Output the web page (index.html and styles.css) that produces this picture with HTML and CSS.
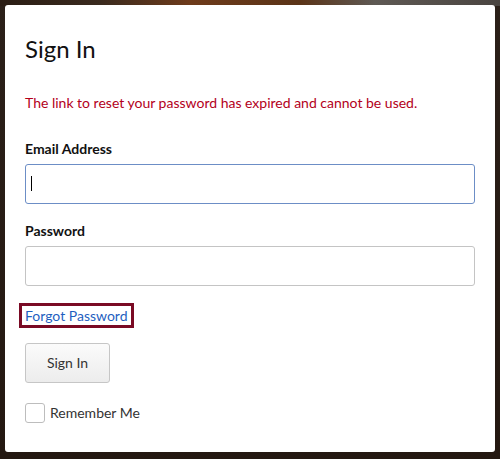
FILE: index.html
```html
<!DOCTYPE html>
<html lang="en">
<head>
    <meta charset="UTF-8">
    <meta name="viewport" content="width=device-width, initial-scale=1.0">
    <title>Sign In</title>
    <link rel="stylesheet" href="styles.css">
</head>
<body>
<div class="backdrop">
    <div class="card">
        <h1>Sign In</h1>

        <p class="error">The link to reset your password has expired and cannot be used.</p>

        <label class="field-label" for="email">Email Address</label>
        <div class="input focused" id="email"><span class="caret"></span></div>

        <label class="field-label second" for="password">Password</label>
        <div class="input" id="password"></div>

        <div class="forgot-row">
            <a href="#" class="forgot">Forgot Password</a>
        </div>

        <div class="actions">
            <button class="btn">Sign In</button>
        </div>

        <label class="remember">
            <span class="checkbox"></span>
            Remember Me
        </label>
    </div>
</div>
</body>
</html>
```

FILE: styles.css
```css
html, body {
    margin: 0;
    padding: 0;
}
body {
    font-family: Lato, "Open Sans", Arial, sans-serif;
    background-color: #231710;
}
.backdrop {
    min-height: 459px;
    padding: 5px;
    box-sizing: border-box;
    background:
        linear-gradient(90deg, #2a1d14 0%, #3a2a1e 20%, #6e3b1b 38%, #5b3418 60%, #5e5954 75%, #4a4440 100%) top / 100% 6px no-repeat,
        linear-gradient(180deg, #2b2019 0%, #241811 100%);
}
.card {
    background-color: #fff;
    border-radius: 3px;
    padding: 30px 20px 29px;
}
h1 {
    margin: 0;
    font-size: 24px;
    font-weight: 400;
    line-height: 1.2;
    color: #111;
}
.error {
    margin: 29px 0 0;
    font-size: 14px;
    line-height: 20px;
    color: #b3001b;
}
.field-label {
    display: block;
    margin-top: 26px;
    margin-bottom: 5px;
    font-size: 14px;
    line-height: 20px;
    font-weight: 700;
    color: #111;
}
.field-label.second {
    margin-top: 17px;
}
.input {
    height: 40px;
    box-sizing: border-box;
    border: 1px solid #c4c4c4;
    border-radius: 3px;
    background: #fff;
    display: flex;
    align-items: center;
    padding-left: 5px;
}
.input.focused {
    border-color: #6c8ec6;
}
.caret {
    width: 1px;
    height: 15px;
    background: #000;
}
.forgot-row {
    display: flex;
    margin-top: 20px;
}
.forgot {
    display: inline-block;
    padding: 1px 3px;
    margin-left: -3px;
    font-size: 14px;
    line-height: 17px;
    color: #1f5fbf;
    text-decoration: none;
    outline: 3px solid #7a0a24;
}
.actions {
    margin-top: 18px;
    display: flex;
}
.btn {
    width: 85px;
    height: 40px;
    font-family: inherit;
    font-size: 14px;
    color: #333;
    background: linear-gradient(180deg, #fbfbfb 0%, #ececec 100%);
    border: 1px solid #c6c6c6;
    border-radius: 3px;
    cursor: pointer;
}
.remember {
    display: flex;
    align-items: center;
    gap: 5px;
    margin-top: 20px;
    font-size: 14px;
    color: #333;
}
.checkbox {
    width: 20px;
    height: 20px;
    box-sizing: border-box;
    border: 1px solid #bdbdbd;
    border-radius: 3px;
    background: #fff;
}
```
